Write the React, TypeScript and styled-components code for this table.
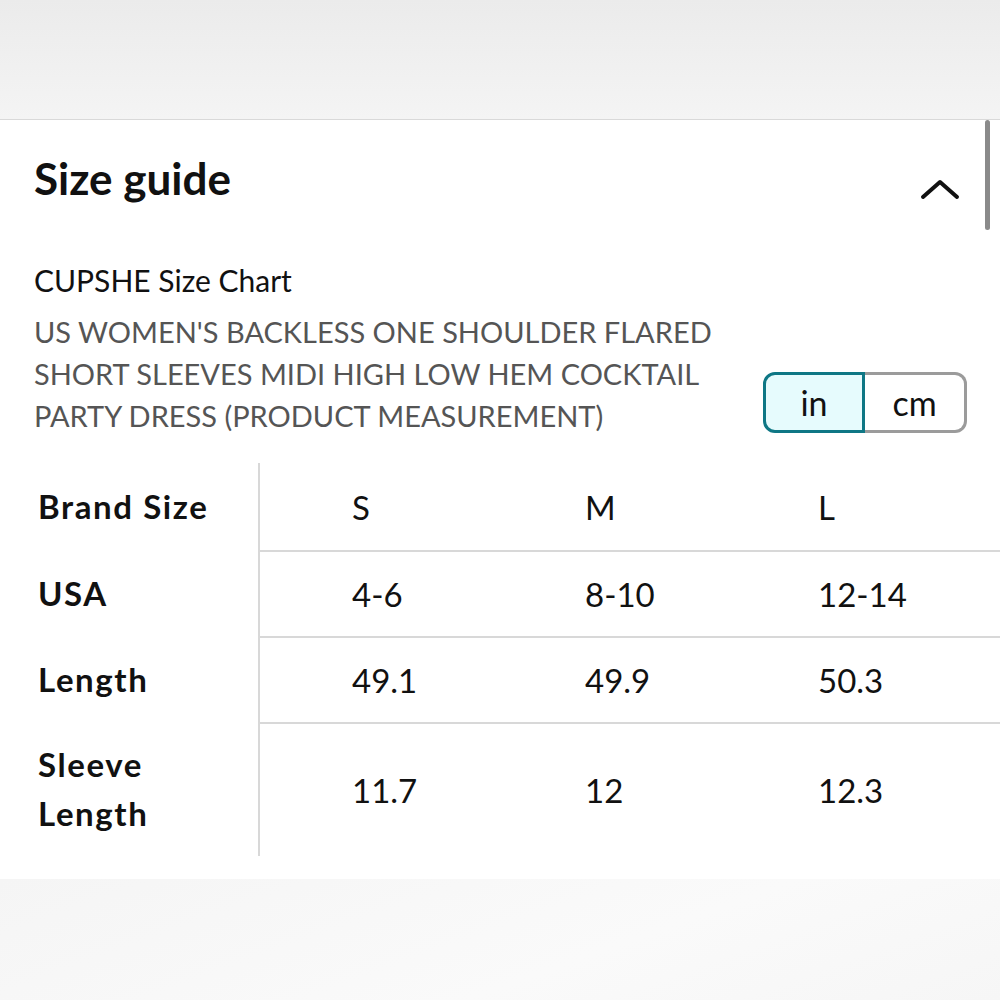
import React, { useState } from 'react';
import styled, { createGlobalStyle } from 'styled-components';

const GlobalStyle = createGlobalStyle`
  body {
    margin: 0;
    background: #f7f7f7;
    font-family: Lato, "Noto Sans", sans-serif;
    color: #111;
  }
`;

interface Row {
  label: string;
  values: string[];
}

const rows: Row[] = [
  { label: 'USA', values: ['4-6', '8-10', '12-14'] },
  { label: 'Length', values: ['49.1', '49.9', '50.3'] },
  { label: 'Sleeve Length', values: ['11.7', '12', '12.3'] },
];

export default function App() {
  const [unit, setUnit] = useState<'in' | 'cm'>('in');

  return (
    <Page>
      <GlobalStyle />
      <TopBar />
      <Panel>
        <ScrollThumb />
        <Header>
          <Title>Size guide</Title>
          <Chevron width="40" height="22" viewBox="0 0 40 22">
            <path d="M3 19 L20 4 L37 19" fill="none" stroke="#111" strokeWidth="4" strokeLinecap="round" strokeLinejoin="round" />
          </Chevron>
        </Header>
        <ChartTitle>CUPSHE Size Chart</ChartTitle>
        <DescRow>
          <Description>
            US WOMEN'S BACKLESS ONE SHOULDER FLARED SHORT SLEEVES MIDI HIGH LOW HEM COCKTAIL PARTY DRESS (PRODUCT MEASUREMENT)
          </Description>
          <Toggle>
            <ToggleButton $active={unit === 'in'} $side="left" onClick={() => setUnit('in')}>in</ToggleButton>
            <ToggleButton $active={unit === 'cm'} $side="right" onClick={() => setUnit('cm')}>cm</ToggleButton>
          </Toggle>
        </DescRow>
        <Table>
          <LabelCell $first>Brand Size</LabelCell>
          <ValueCell $first>S</ValueCell>
          <ValueCell $first>M</ValueCell>
          <ValueCell $first>L</ValueCell>
          {rows.map((row) => (
            <React.Fragment key={row.label}>
              <LabelCell>{row.label}</LabelCell>
              {row.values.map((v, i) => (
                <ValueCell key={i}>{v}</ValueCell>
              ))}
            </React.Fragment>
          ))}
        </Table>
      </Panel>
      <BottomArea />
    </Page>
  );
}

const Page = styled.div`
  width: 1000px;
  min-height: 1000px;
  display: flex;
  flex-direction: column;
  overflow: hidden;
`;

const TopBar = styled.div`
  height: 119px;
  background: linear-gradient(180deg, #ebebeb 0%, #f4f4f4 100%);
  border-bottom: 1px solid #d9d9d9;
`;

const Panel = styled.div`
  position: relative;
  background: #fff;
  padding: 34px 0 23px 0;
`;

const ScrollThumb = styled.div`
  position: absolute;
  top: 0;
  right: 10px;
  width: 5px;
  height: 110px;
  border-radius: 3px;
  background: #8a8a8a;
`;

const Header = styled.div`
  display: flex;
  justify-content: space-between;
  align-items: center;
  padding: 0 40px 0 34px;
`;

const Title = styled.h1`
  margin: 0;
  font-size: 44px;
  line-height: 48px;
  font-weight: 700;
  color: #111;
`;

const Chevron = styled.svg`
  margin-top: 22px;
  display: block;
`;

const ChartTitle = styled.div`
  margin-top: 57px;
  padding-left: 34px;
  font-size: 30px;
  line-height: 42px;
  color: #111;
`;

const DescRow = styled.div`
  display: flex;
  align-items: flex-end;
  justify-content: space-between;
  margin-top: 10px;
  padding: 0 33px 0 34px;
`;

const Description = styled.div`
  width: 700px;
  font-size: 29px;
  line-height: 42px;
  color: #555;
`;

const Toggle = styled.div`
  display: flex;
  margin-bottom: 4px;
`;

const ToggleButton = styled.button<{ $active: boolean; $side: 'left' | 'right' }>`
  width: 102px;
  height: 61px;
  box-sizing: border-box;
  font-family: Lato, "Noto Sans", sans-serif;
  font-size: 34px;
  color: #111;
  cursor: pointer;
  background: ${(p) => (p.$active ? '#e6fbfd' : '#fff')};
  border: 3.5px solid ${(p) => (p.$active ? '#0e7785' : '#9b9b9b')};
  border-radius: ${(p) => (p.$side === 'left' ? '12px 0 0 12px' : '0 12px 12px 0')};
  ${(p) => (p.$side === 'right' ? 'border-left: none;' : '')}
`;

const Table = styled.div`
  margin-top: 26px;
  display: grid;
  grid-template-columns: 260px 233px 233px 274px;
`;

const LabelCell = styled.div<{ $first?: boolean }>`
  box-sizing: border-box;
  display: flex;
  align-items: center;
  padding: ${(p) => (p.$first ? '19px 30px 19px 38px' : '18px 30px 18px 38px')};
  border-right: 2px solid #d8d8d8;
  font-size: 33px;
  line-height: 49px;
  font-weight: 700;
  letter-spacing: 1.6px;
  color: #111;
`;

const ValueCell = styled.div<{ $first?: boolean }>`
  box-sizing: border-box;
  display: flex;
  align-items: center;
  padding: ${(p) => (p.$first ? '19px 0 19px 92px' : '18px 0 18px 92px')};
  border-top: ${(p) => (p.$first ? 'none' : '2px solid #d8d8d8')};
  font-size: 33px;
  line-height: 48px;
  color: #111;
`;

const BottomArea = styled.div`
  flex: 1;
  background: linear-gradient(160deg, #f5f5f5 0%, #fafafa 60%, #f6f6f6 100%);
`;
